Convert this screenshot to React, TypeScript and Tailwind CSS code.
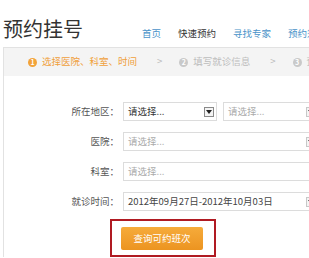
import React from 'react';

const Arrow = ({ light }: { light?: boolean }) => (
    <span className={`flex h-[10px] w-[10px] shrink-0 items-center justify-center border ${light ? 'border-[#c8c8c8]' : 'border-[#8a8a8a]'} bg-[#f4f4f4]`}>
        <span className="h-0 w-0 border-x-[3px] border-t-[4px] border-x-transparent border-t-[#222]" />
    </span>
);

const Select = ({ text, dark, width, arrow = true }: { text: string; dark?: boolean; width: string; arrow?: boolean }) => (
    <div className={`flex h-[19px] ${width} shrink-0 items-center justify-between border border-[#dcdcdc] bg-white pl-[4px] pr-[2px]`}>
        <span className={dark ? 'text-[#333]' : 'text-[#aaa]'}>{text}</span>
        {arrow && <Arrow light={!dark} />}
    </div>
);

const Row = ({ label, children }: { label: string; children: React.ReactNode }) => (
    <div className="flex h-[19px] items-center">
        <div className="w-[115px] shrink-0 whitespace-nowrap text-right text-[#555]">{label}</div>
        <div className="ml-[4px] flex shrink-0 gap-[6px]">{children}</div>
    </div>
);

export default function App() {
    const steps = [
        { n: '1', label: '选择医院、科室、时间', active: true },
        { n: '2', label: '填写就诊信息' },
        { n: '3', label: '预约成功' },
    ];

    return (
        <div className="h-[258px] w-[309px] overflow-hidden bg-white text-[9.5px] leading-none" style={{ fontFamily: '"Noto Sans CJK SC", "Noto Sans", sans-serif' }}>
            <div className="flex h-[47px] items-start">
                <h1 className="ml-[3px] mt-[18px] shrink-0 whitespace-nowrap text-[20px] leading-[22px] text-[#333]">预约挂号</h1>
                <nav className="ml-[59px] mt-[28px] flex shrink-0 gap-[17px] whitespace-nowrap text-[9.5px] leading-[10px]">
                    <span className="text-[#4a93c9]">首页</span>
                    <span className="text-[#333]">快速预约</span>
                    <span className="text-[#4a93c9]">寻找专家</span>
                    <span className="text-[#4a93c9]">预约须知</span>
                </nav>
            </div>

            <div className="ml-[3px] flex flex-col border-l border-t border-[#e2e2e2]">
                <div className="flex h-[28px] items-center whitespace-nowrap bg-[#f4f4f4] pl-[24px]">
                    {steps.map((s, i) => (
                        <React.Fragment key={s.n}>
                            {i > 0 && <span className="ml-[20px] mr-[17px] text-[#bbb]">&gt;</span>}
                            <span className={`flex h-[9px] w-[9px] shrink-0 items-center justify-center rounded-full text-[7px] font-bold leading-none text-white ${s.active ? 'bg-[#f2a33a]' : 'bg-[#c9c9c9]'}`}>{s.n}</span>
                            <span className={`ml-[5px] ${s.active ? 'text-[#f0a03c]' : 'text-[#bdbdbd]'}`}>{s.label}</span>
                        </React.Fragment>
                    ))}
                </div>

                <div className="flex flex-col gap-[11px] pt-[26px]">
                    <Row label="所在地区：">
                        <Select text="请选择..." dark width="w-[94px]" />
                        <Select text="请选择..." width="w-[96px]" />
                    </Row>
                    <Row label="医院：">
                        <Select text="请选择..." width="w-[196px]" />
                    </Row>
                    <Row label="科室：">
                        <Select text="请选择..." width="w-[220px]" arrow={false} />
                    </Row>
                    <Row label="就诊时间：">
                        <div className="flex h-[19px] w-[196px] shrink-0 items-center justify-between border border-[#dcdcdc] bg-white pl-[4px] pr-[2px]">
                            <span className="whitespace-nowrap text-[#444]">2012年09月27日-2012年10月03日</span>
                            <Arrow light />
                        </div>
                    </Row>
                </div>

                <div className="ml-[106px] mt-[8px] flex h-[38px] w-[106px] items-start border-2 border-[#b01a22] pl-[9px] pt-[6px]">
                    <button className="h-[23px] w-[82px] rounded-[2px] bg-gradient-to-b from-[#f6ab3a] to-[#ec9420] text-[9.5px] text-white">
                        查询可约班次
                    </button>
                </div>
            </div>
        </div>
    );
}
